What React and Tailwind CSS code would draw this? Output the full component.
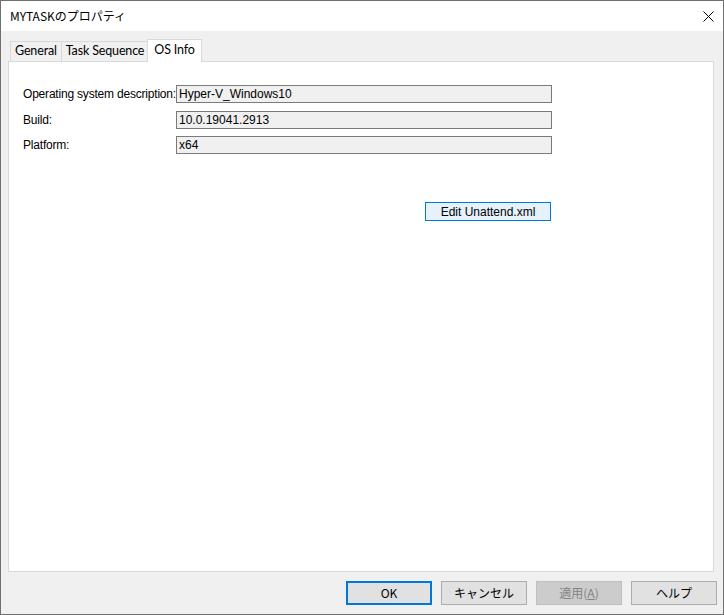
const ui = { fontFamily: 'Lato, "Noto Sans", "Noto Sans CJK JP", sans-serif' };
const jp = { fontFamily: '"Noto Sans CJK JP", "Noto Sans", sans-serif' };
const classic = { fontFamily: '"Liberation Sans", "Noto Sans CJK JP", sans-serif' };

const fields = [
  { label: 'Operating system description:', value: 'Hyper-V_Windows10', mt: 'mt-[23px]' },
  { label: 'Build:', value: '10.0.19041.2913', mt: 'mt-[8px]' },
  { label: 'Platform:', value: 'x64', mt: 'mt-[7px]' },
];

export default function App() {
  return (
    <div className="flex h-[615px] w-[724px] flex-col border border-[#707070] bg-[#f0f0f0] text-black">
      {/* title bar */}
      <div className="flex h-[30px] shrink-0 items-center justify-between bg-white pl-[9px] pr-[9px]">
        <span className="text-[12px]" style={jp}>MYTASKのプロパティ</span>
        <svg width="11" height="11" viewBox="0 0 11 11" className="mt-[1px]">
          <path d="M0.5 0.5 L10.5 10.5 M10.5 0.5 L0.5 10.5" stroke="#000" strokeWidth="1" />
        </svg>
      </div>

      {/* tabs */}
      <div className="ml-[9px] mt-[8px] flex h-[22px] items-end text-[12.5px] tracking-[-0.15px]" style={ui}>
        <div className="-mr-px flex h-[20px] items-center border border-b-0 border-[#d9d9d9] px-[4px]">General</div>
        <div className="flex h-[20px] items-center border border-b-0 border-[#d9d9d9] px-[4px]">Task Sequence</div>
        <div className="relative z-10 -mb-px -ml-[2px] flex h-[23px] items-center border border-b-0 border-[#d9d9d9] bg-white px-[6px] pb-[2px]">
          OS Info
        </div>
      </div>

      {/* panel */}
      <div className="ml-[7px] h-[511px] w-[706px] border border-[#d9d9d9] bg-white pl-[14px]" style={classic}>
        {fields.map((f) => (
          <div key={f.label} className={`flex items-center ${f.mt}`}>
            <div className="w-[153px] whitespace-nowrap text-[12px] tracking-[-0.2px]">{f.label}</div>
            <div className="flex h-[18px] w-[376px] items-center border border-[#7a7a7a] bg-[#f0f0f0] pl-[2px] text-[12px]">
              {f.value}
            </div>
          </div>
        ))}
        <div className="ml-[402px] mt-[48px] flex h-[19px] w-[126px] items-center justify-center border border-[#0078d7] bg-[#e5f1fb] text-[12px]">
          Edit Unattend.xml
        </div>
      </div>

      {/* footer buttons */}
      <div className="mt-[9px] flex justify-end gap-[9px] pr-[6px] text-[12px]" style={jp}>
        <div className="flex h-[24px] w-[86px] items-center justify-center border-2 border-[#0078d7] bg-[#e1e1e1]">OK</div>
        <div className="flex h-[24px] w-[86px] items-center justify-center border border-[#adadad] bg-[#e1e1e1]">キャンセル</div>
        <div className="flex h-[24px] w-[86px] items-center justify-center border border-[#bfbfbf] bg-[#cccccc] text-[#838383]">
          適用(<span className="underline">A</span>)
        </div>
        <div className="flex h-[24px] w-[86px] items-center justify-center border border-[#adadad] bg-[#e1e1e1]">ヘルプ</div>
      </div>
    </div>
  );
}
